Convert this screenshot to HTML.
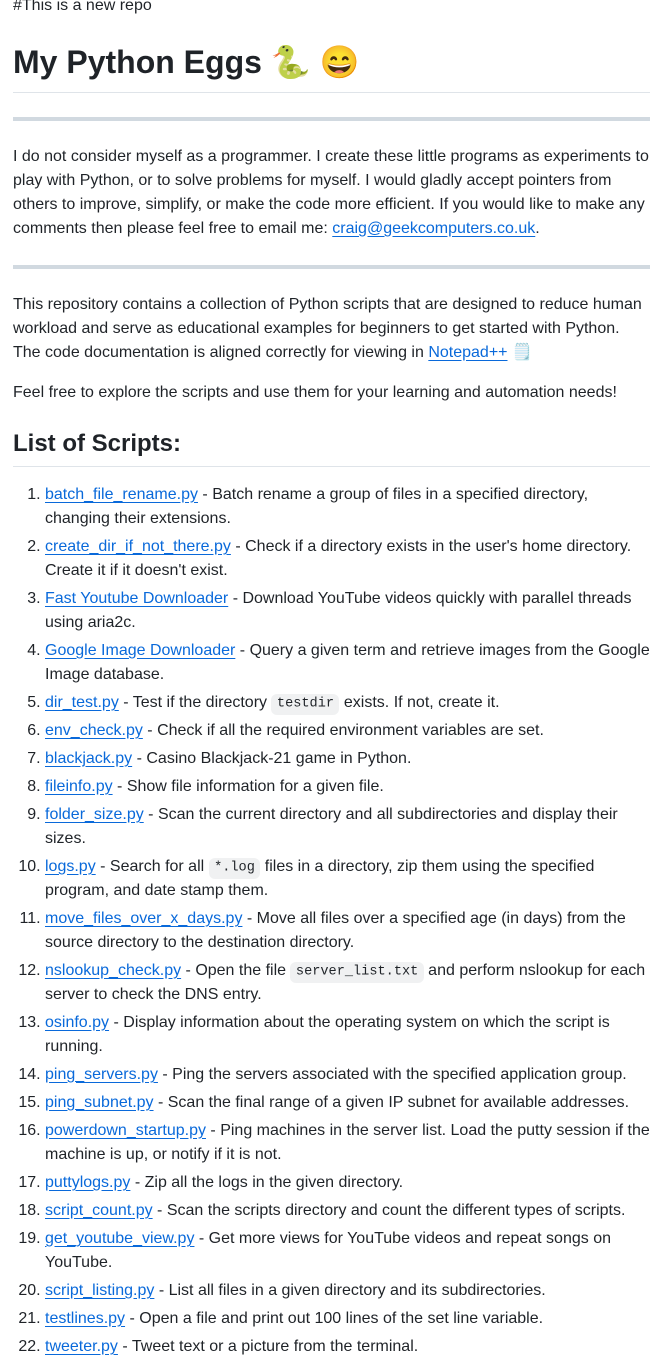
<!DOCTYPE html>
<html><head><meta charset="utf-8"><style>
html,body{margin:0;padding:0;background:#fff}
body{width:662px;height:1330px;overflow:hidden;font-family:"Liberation Sans",sans-serif;font-size:16px;line-height:24px;color:#1f2328}
.c{position:absolute;left:13px;top:-6px;width:637px}
p{margin:0 0 16px}
h1{font-size:32px;line-height:40px;font-weight:600;margin:24px 0 16px;padding-bottom:9.6px;border-bottom:1px solid #d1d9e0b3}
h2{font-size:24px;line-height:30px;font-weight:600;margin:24px 0 16px;padding-bottom:7.2px;border-bottom:1px solid #d1d9e0b3}
hr{height:4px;border:0;background:#d1d9e0;margin:24px 0;padding:0}
a{color:#0969da;text-decoration:underline;text-underline-offset:.2rem}
ol{margin:0;padding-left:32px}
li+li{margin-top:4px}
code{font-family:"Liberation Mono","DejaVu Sans Mono",monospace;font-size:85%;line-height:1;background:#818b981f;padding:.2em .4em;border-radius:6px}
</style></head><body><div class="c">
<p>#This is a new repo</p>
<h1>My Python Eggs 🐍 😄</h1>
<hr>
<p>I do not consider myself as a programmer. I create these little programs as experiments to play with Python, or to solve problems for myself. I would gladly accept pointers from others to improve, simplify, or make the code more efficient. If you would like to make any comments then please feel free to email me: <a>craig@geekcomputers.co.uk</a>.</p>
<hr>
<p>This repository contains a collection of Python scripts that are designed to reduce human workload and serve as educational examples for beginners to get started with Python. The code documentation is aligned correctly for viewing in <a>Notepad++</a> 🗒️</p>
<p>Feel free to explore the scripts and use them for your learning and automation needs!</p>
<h2>List of Scripts:</h2>
<ol>
<li><a>batch_file_rename.py</a> - Batch rename a group of files in a specified directory, changing their extensions.</li>
<li><a>create_dir_if_not_there.py</a> - Check if a directory exists in the user's home directory. Create it if it doesn't exist.</li>
<li><a>Fast Youtube Downloader</a> - Download YouTube videos quickly with parallel threads using aria2c.</li>
<li><a>Google Image Downloader</a> - Query a given term and retrieve images from the Google Image database.</li>
<li><a>dir_test.py</a> - Test if the directory <code>testdir</code> exists. If not, create it.</li>
<li><a>env_check.py</a> - Check if all the required environment variables are set.</li>
<li><a>blackjack.py</a> - Casino Blackjack-21 game in Python.</li>
<li><a>fileinfo.py</a> - Show file information for a given file.</li>
<li><a>folder_size.py</a> - Scan the current directory and all subdirectories and display their sizes.</li>
<li><a>logs.py</a> - Search for all <code>*.log</code> files in a directory, zip them using the specified program, and date stamp them.</li>
<li><a>move_files_over_x_days.py</a> - Move all files over a specified age (in days) from the source directory to the destination directory.</li>
<li><a>nslookup_check.py</a> - Open the file <code>server_list.txt</code> and perform nslookup for each server to check the DNS entry.</li>
<li><a>osinfo.py</a> - Display information about the operating system on which the script is running.</li>
<li><a>ping_servers.py</a> - Ping the servers associated with the specified application group.</li>
<li><a>ping_subnet.py</a> - Scan the final range of a given IP subnet for available addresses.</li>
<li><a>powerdown_startup.py</a> - Ping machines in the server list. Load the putty session if the machine is up, or notify if it is not.</li>
<li><a>puttylogs.py</a> - Zip all the logs in the given directory.</li>
<li><a>script_count.py</a> - Scan the scripts directory and count the different types of scripts.</li>
<li><a>get_youtube_view.py</a> - Get more views for YouTube videos and repeat songs on YouTube.</li>
<li><a>script_listing.py</a> - List all files in a given directory and its subdirectories.</li>
<li><a>testlines.py</a> - Open a file and print out 100 lines of the set line variable.</li>
<li><a>tweeter.py</a> - Tweet text or a picture from the terminal.</li>
</ol>
</div></body></html>
